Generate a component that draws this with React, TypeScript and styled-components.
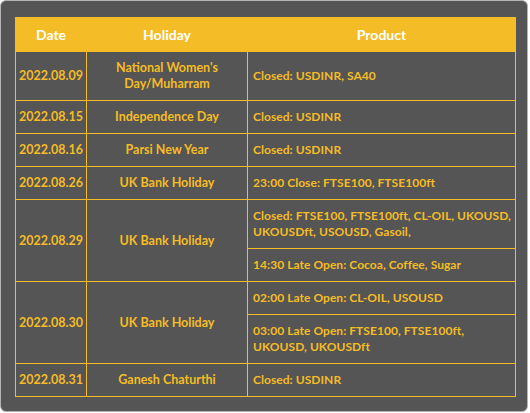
import React, { ReactElement } from 'react';
import styled, { createGlobalStyle } from 'styled-components';

const GlobalStyle = createGlobalStyle`
  html, body {
    margin: 0;
    padding: 0;
    background: #ffffff;
  }
`;

const Panel = styled.div`
  box-sizing: border-box;
  width: 528px;
  height: 412px;
  padding: 16px 12px 0 14px;
  background: #555555;
  border: 1px solid #b4b4b4;
  border-radius: 6px;
  font-family: Lato, 'Open Sans', sans-serif;
  font-weight: 700;
  font-size: 12.5px;
  line-height: 16px;
`;

const Table = styled.table`
  width: 500px;
  table-layout: fixed;
  border-collapse: collapse;
  color: #f4bc26;
`;

const HeadCell = styled.th`
  height: 33px;
  padding: 0;
  background: #f4bc26;
  color: #ffffff;
  font-size: 14px;
  font-weight: 700;
  text-align: center;
  border: 1px solid #f4bc26;
`;

const Cell = styled.td<{ $align?: 'left' | 'center' }>`
  padding: 8px ${(p) => (p.$align === 'left' ? '4px 8px 5px' : '0')};
  text-align: ${(p) => p.$align ?? 'center'};
  vertical-align: middle;
  border: 1px solid #f4bc26;
  font-size: ${(p) => (p.$align === 'left' ? '12px' : '12.5px')};
  letter-spacing: ${(p) => (p.$align === 'left' ? '0.05px' : 'normal')};
`;

type Row = {
  date: string;
  holiday: string;
  products: string[];
};

const rows: Row[] = [
  { date: '2022.08.09', holiday: "National Women's Day/Muharram", products: ['Closed: USDINR, SA40'] },
  { date: '2022.08.15', holiday: 'Independence Day', products: ['Closed: USDINR'] },
  { date: '2022.08.16', holiday: 'Parsi New Year', products: ['Closed: USDINR'] },
  { date: '2022.08.26', holiday: 'UK Bank Holiday', products: ['23:00 Close: FTSE100, FTSE100ft'] },
  {
    date: '2022.08.29',
    holiday: 'UK Bank Holiday',
    products: [
      'Closed: FTSE100, FTSE100ft, CL-OIL, UKOUSD, UKOUSDft, USOUSD, Gasoil,',
      '14:30 Late Open: Cocoa, Coffee, Sugar'
    ]
  },
  {
    date: '2022.08.30',
    holiday: 'UK Bank Holiday',
    products: [
      '02:00 Late Open: CL-OIL, USOUSD',
      '03:00 Late Open: FTSE100, FTSE100ft, UKOUSD, UKOUSDft'
    ]
  },
  { date: '2022.08.31', holiday: 'Ganesh Chaturthi', products: ['Closed: USDINR'] }
];

const HolidayRows = ({ row }: { row: Row }): ReactElement => {
  const span = row.products.length;
  return (
    <>
      <tr>
        <Cell rowSpan={span}>{row.date}</Cell>
        <Cell rowSpan={span}>{row.holiday}</Cell>
        <Cell $align="left">{row.products[0]}</Cell>
      </tr>
      {row.products.slice(1).map(
        (product, index): ReactElement => (
          <tr key={index}>
            <Cell $align="left">{product}</Cell>
          </tr>
        )
      )}
    </>
  );
};

const App = (): ReactElement => {
  return (
    <>
      <GlobalStyle />
      <Panel>
        <Table>
          <colgroup>
            <col style={{ width: 71 }} />
            <col style={{ width: 161 }} />
            <col style={{ width: 268 }} />
          </colgroup>
          <thead>
            <tr>
              <HeadCell>Date</HeadCell>
              <HeadCell>Holiday</HeadCell>
              <HeadCell>Product</HeadCell>
            </tr>
          </thead>
          <tbody>
            {rows.map(
              (row): ReactElement => (
                <HolidayRows key={row.date} row={row} />
              )
            )}
          </tbody>
        </Table>
      </Panel>
    </>
  );
};

export default App;
